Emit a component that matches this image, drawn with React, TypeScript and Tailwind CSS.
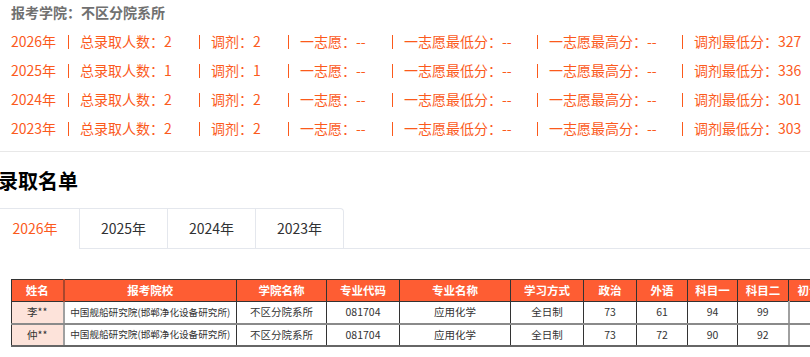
import React from "react";

const ORANGE = "text-[#fb5a1c]";

const rows = [
  { y: "2026", total: "2", tj: "2", min: "327" },
  { y: "2025", total: "1", tj: "1", min: "336" },
  { y: "2024", total: "2", tj: "2", min: "301" },
  { y: "2023", total: "2", tj: "2", min: "303" },
];

function Item({ w, children }: { w: string; children: React.ReactNode }) {
  return (
    <div className={`flex items-center shrink-0 ${w}`}>
      <span className="w-px h-[14px] bg-[#fb5a1c] shrink-0" />
      <span className="pl-[11px] whitespace-nowrap">{children}</span>
    </div>
  );
}

const cols = [52, 173, 90, 73, 111, 73, 53, 51, 50, 51, 64];
const heads = ["姓名", "报考院校", "学院名称", "专业代码", "专业名称", "学习方式", "政治", "外语", "科目一", "科目二", "初试总分"];
const people = [
  ["李**", "中国舰船研究院(邯郸净化设备研究所)", "不区分院系所", "081704", "应用化学", "全日制", "73", "61", "94", "99", "327"],
  ["仲**", "中国舰船研究院(邯郸净化设备研究所)", "不区分院系所", "081704", "应用化学", "全日制", "73", "72", "90", "92", "327"],
];

export default function App() {
  return (
    <div
      className="w-[810px] h-[357px] overflow-hidden bg-white"
      style={{ fontFamily: '"Noto Sans CJK SC", "Noto Sans", sans-serif' }}
    >
      <div className="pb-[8px] border-b border-[#e8e8e8]">
        <div className="pl-[11px] h-[24px] leading-[24px] text-[14px] font-bold text-[#707070]">
          报考学院：不区分院系所
        </div>
        <div className="mt-[3px]">
          {rows.map((r) => (
            <div key={r.y} className={`flex items-center h-[29px] pl-[11px] text-[14px] ${ORANGE}`}>
              <div className="w-[57px] shrink-0 whitespace-nowrap">{r.y}年</div>
              <Item w="w-[131px]">总录取人数：{r.total}</Item>
              <Item w="w-[89px]">调剂：{r.tj}</Item>
              <Item w="w-[104px]">一志愿：--</Item>
              <Item w="w-[145px]">一志愿最低分：--</Item>
              <Item w="w-[145px]">一志愿最高分：--</Item>
              <Item w="w-[140px]">调剂最低分：{r.min}</Item>
            </div>
          ))}
        </div>
      </div>

      <div className="-ml-[2px] mt-[15px] h-[28px] leading-[28px] text-[20px] font-bold text-black">
        录取名单
      </div>

      <div className="mt-[13px] -ml-[10px] flex h-[41px]">
        <div className="flex border-t border-l border-r border-[#e4e7ed] rounded-tr-[4px]">
          {["2026年", "2025年", "2024年", "2023年"].map((t, i) => (
            <div
              key={t}
              className={`w-[88px] h-[40px] flex items-center justify-center text-[14px] border-b ${
                i === 0 ? "text-[#fb5a1c] border-b-white" : "text-[#303133] border-l border-[#e4e7ed]"
              }`}
            >
              {t}
            </div>
          ))}
        </div>
        <div className="flex-1 border-b border-[#e4e7ed]" />
      </div>

      <div className="mt-[30px] pl-[11px]">
        <table className="table-fixed border-collapse" style={{ width: cols.reduce((a, b) => a + b, 0) }}>
          <colgroup>
            {cols.map((c, i) => (
              <col key={i} style={{ width: c }} />
            ))}
          </colgroup>
          <thead>
            <tr className="h-[22px] bg-[#fe5d33]">
              {heads.map((h, i) => (
                <th
                  key={h}
                  className={`border border-[#333] p-0 text-[11.5px] font-bold text-white text-center whitespace-nowrap ${
                    i === 0 ? "border-r-2 border-r-[#a8472d]" : ""
                  }`}
                >
                  {h}
                </th>
              ))}
            </tr>
          </thead>
          <tbody>
            {people.map((p, ri) => (
              <tr key={ri} className="h-[22px]">
                {p.map((c, i) => (
                  <td
                    key={i}
                    className={`border border-[#333] p-0 text-[#333] text-center whitespace-nowrap overflow-hidden ${
                      i === 1 ? "text-[9.6px]" : "text-[10.5px]"
                    } ${ri === 0 ? "border-b-2 border-b-[#8a8a8a]" : "border-b-2 border-b-[#666]"} ${
                      i === 0 ? "bg-[#fde3da] border-r-2 border-r-[#a0a0a0]" : ""
                    } ${i === 10 ? "border-l-2 border-l-[#a0a0a0]" : ""}`}
                  >
                    {c}
                  </td>
                ))}
              </tr>
            ))}
          </tbody>
        </table>
      </div>
    </div>
  );
}
